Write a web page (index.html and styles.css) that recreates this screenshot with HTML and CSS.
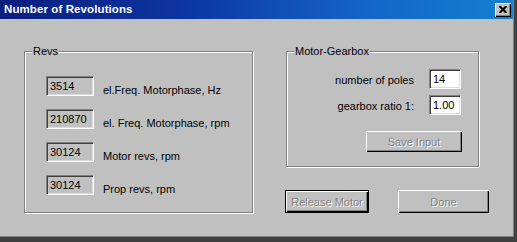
FILE: index.html
```html
<!DOCTYPE html>
<html>
<head>
<meta charset="utf-8">
<link rel="stylesheet" href="styles.css">
</head>
<body>
<div class="window">
  <div class="titlebar">
    <span class="title">Number of Revolutions</span>
    <span class="close"><svg width="8" height="7" viewBox="0 0 8 7"><path d="M0 0h2l2 2 2-2h2v1l-2.5 2.5 2.5 2.5v1h-2l-2-2-2 2h-2v-1l2.5-2.5-2.5-2.5z" fill="#000"/></svg></span>
  </div>
  <div class="content">
    <div class="group revs">
      <span class="legend">Revs</span>
      <div class="rows">
        <div class="row"><span class="box ro">3514</span><span class="lbl">el.Freq. Motorphase, Hz</span></div>
        <div class="row"><span class="box ro">210870</span><span class="lbl">el. Freq. Motorphase, rpm</span></div>
        <div class="row"><span class="box ro">30124</span><span class="lbl">Motor revs, rpm</span></div>
        <div class="row"><span class="box ro">30124</span><span class="lbl">Prop revs, rpm</span></div>
      </div>
    </div>
    <div class="rightcol">
      <div class="group gear">
        <span class="legend">Motor-Gearbox</span>
        <div class="frow"><span class="flbl">number of poles</span><span class="box edit">14</span></div>
        <div class="frow"><span class="flbl">gearbox ratio 1:</span><span class="box edit">1.00</span></div>
        <div class="btn save">Save Input</div>
      </div>
      <div class="buttons">
        <div class="btn default release">Release Motor</div>
        <div class="btn done">Done</div>
      </div>
    </div>
  </div>
</div>
</body>
</html>
```
FILE: styles.css
```css
html, body {
  margin: 0;
  padding: 0;
  background: #c0c0c0;
}
body {
  font-family: "Liberation Sans", Arial, sans-serif;
  font-size: 11px;
  color: #000;
}
.window {
  width: 517px;
  height: 242px;
  box-sizing: border-box;
  background: #c0c0c0;
  border-right: 3px solid #404040;
  border-bottom: 5px solid #404040;
  box-shadow: inset -1px -1px #808080;
  display: flex;
  flex-direction: column;
}
.titlebar {
  height: 19px;
  margin-right: 1px;
  display: flex;
  align-items: center;
  justify-content: space-between;
  padding: 0 2px 0 4px;
  background: linear-gradient(to right, #0a1e80 0%, #0c34a0 35%, #1464c4 70%, #1280d2 100%);
}
.title {
  color: #fff;
  font-weight: bold;
  font-size: 11.5px;
  letter-spacing: 0.1px;
  line-height: 19px;
}
.close {
  width: 16px;
  height: 14px;
  box-sizing: border-box;
  background: #c0c0c0;
  box-shadow: inset 1px 1px #fff, inset -1px -1px #000, inset -2px -2px #808080;
  display: flex;
  align-items: center;
  justify-content: center;
}
.content {
  display: flex;
  padding: 32px 0 0 24px;
  gap: 33px;
}
.group {
  position: relative;
  box-sizing: border-box;
  border: 1px solid #808080;
  box-shadow: inset 1px 1px #fff, 1px 1px #fff;
}
.legend {
  position: absolute;
  top: -7px;
  left: 7px;
  padding: 0 1px;
  background: #c0c0c0;
  line-height: 13px;
}
.revs {
  width: 229px;
  height: 162px;
  padding: 23px 0 0 21px;
}
.rows {
  display: flex;
  flex-direction: column;
  gap: 12px;
}
.row {
  display: flex;
  align-items: center;
  gap: 9px;
}
.box {
  box-sizing: border-box;
  height: 20px;
  padding: 2px 0 0 3px;
  line-height: 14px;
  border-top: 1px solid #808080;
  border-left: 1px solid #808080;
  border-right: 1px solid #fff;
  border-bottom: 1px solid #fff;
  box-shadow: inset 1px 1px #404040, inset -1px -1px #dcdcdc;
}
.ro {
  width: 48px;
  background: #c0c0c0;
}
.edit {
  width: 32px;
  background: #fff;
}
.lbl {
  padding-top: 9px;
}
.rightcol {
  display: flex;
  flex-direction: column;
}
.gear {
  width: 193px;
  height: 116px;
  padding: 17px 17px 0 0;
  display: flex;
  flex-direction: column;
  align-items: flex-end;
  gap: 6px;
}
.frow {
  display: flex;
  align-items: center;
  gap: 15px;
}
.flbl {
  padding-top: 2px;
}
.btn {
  box-sizing: border-box;
  display: flex;
  align-items: center;
  justify-content: center;
  background: #c0c0c0;
  color: #808080;
  text-shadow: 1px 1px #fff;
  box-shadow: inset 1px 1px #fff, inset -1px -1px #000, inset -2px -2px #808080;
}
.save {
  width: 96px;
  height: 21px;
  margin-top: 10px;
  margin-right: -1px;
}
.buttons {
  display: flex;
  gap: 29px;
  margin-top: 23px;
  margin-left: -1px;
}
.release {
  width: 84px;
  height: 23px;
  border: 1px solid #000;
  box-shadow: inset 1px 1px #fff, inset -1px -1px #000, inset -2px -2px #808080;
}
.done {
  width: 91px;
  height: 23px;
}
```
